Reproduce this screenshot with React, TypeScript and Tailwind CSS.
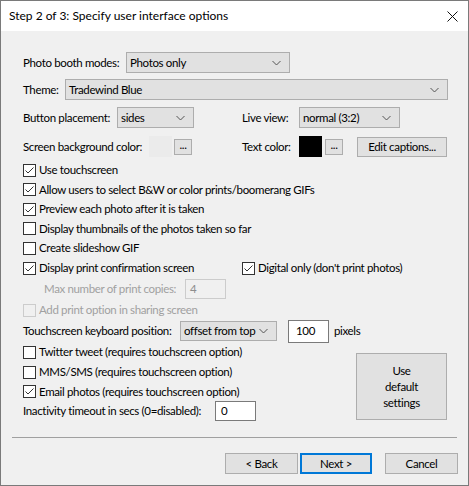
import React from 'react';

const font = { fontFamily: 'Lato, "Liberation Sans", Arial, sans-serif' };

function Check({ checked = false, disabled = false }: { checked?: boolean; disabled?: boolean }) {
  return (
    <span
      className={
        'flex h-[13px] w-[13px] shrink-0 items-center justify-center border ' +
        (disabled ? 'border-[#cccccc] bg-[#f0f0f0]' : 'border-[#333333] bg-white')
      }
    >
      {checked && (
        <svg width="11" height="11" viewBox="0 0 11 11">
          <path d="M1.5 5.5 L4 8 L9.5 2.5" fill="none" stroke="#333333" strokeWidth="1" />
        </svg>
      )}
    </span>
  );
}

function CheckRow({
  label,
  checked,
  disabled,
  h,
}: {
  label: string;
  checked?: boolean;
  disabled?: boolean;
  h: string;
}) {
  return (
    <div className={'flex items-center gap-[3px] ' + h}>
      <Check checked={checked} disabled={disabled} />
      <span className={disabled ? 'text-[#a0a0a0]' : 'text-black'}>{label}</span>
    </div>
  );
}

function Chevron() {
  return (
    <svg width="9" height="6" viewBox="0 0 9 6" className="shrink-0">
      <path d="M0.5 1 L4.5 5 L8.5 1" fill="none" stroke="#555555" strokeWidth="1" />
    </svg>
  );
}

function Combo({ value, w, h = 'h-[21px]' }: { value: string; w: string; h?: string }) {
  return (
    <div
      className={
        'flex shrink-0 items-center justify-between border border-[#adadad] bg-[#e1e1e1] pl-[3px] pr-[8px] ' + w + ' ' + h
      }
    >
      <span>{value}</span>
      <Chevron />
    </div>
  );
}

function Btn({ children, className = '' }: { children: React.ReactNode; className?: string }) {
  return (
    <div className={'flex shrink-0 items-center justify-center border border-[#adadad] bg-[#e1e1e1] ' + className}>
      {children}
    </div>
  );
}

export default function App() {
  return (
    <div
      className="flex h-[486px] w-[469px] flex-col whitespace-nowrap border border-[#7a7a7a] bg-[#f0f0f0] text-[11.5px] leading-none tracking-[-0.35px] text-black"
      style={font}
    >
      {/* title bar */}
      <div className="flex h-[30px] shrink-0 items-center justify-between bg-white pl-[8px] pr-[10px]">
        <span className="text-[12px] tracking-normal">Step 2 of 3: Specify user interface options</span>
        <svg width="11" height="11" viewBox="0 0 11 11">
          <path d="M0.5 0.5 L10.5 10.5 M10.5 0.5 L0.5 10.5" stroke="#111111" strokeWidth="1" />
        </svg>
      </div>

      <div className="flex flex-col pl-[22px] pt-[21px]">
        <div className="flex h-[21px] items-center">
          <span className="w-[103px] shrink-0">Photo booth modes:</span>
          <Combo value="Photos only" w="w-[164px]" />
        </div>
        <div className="mt-[6px] flex h-[21px] items-center">
          <span className="w-[42px] shrink-0">Theme:</span>
          <Combo value="Tradewind Blue" w="w-[383px]" />
        </div>
        <div className="mt-[7px] flex h-[21px] items-center">
          <span className="w-[94px] shrink-0">Button placement:</span>
          <Combo value="sides" w="w-[77px]" />
          <span className="ml-[48px] w-[57px] shrink-0">Live view:</span>
          <Combo value="normal (3:2)" w="w-[101px]" />
        </div>
        <div className="mt-[8px] flex h-[21px] items-center">
          <span className="w-[126px] shrink-0">Screen background color:</span>
          <span className="h-[21px] w-[23px] shrink-0 bg-[#ebebeb]" />
          <Btn className="ml-[2px] h-[16px] w-[18px] pb-[3px]">...</Btn>
          <span className="ml-[50px] w-[57px] shrink-0">Text color:</span>
          <span className="h-[21px] w-[23px] shrink-0 bg-black" />
          <Btn className="ml-[3px] h-[16px] w-[18px] pb-[3px]">...</Btn>
          <Btn className="ml-[14px] h-[20px] w-[90px]">Edit captions...</Btn>
        </div>

        <div className="mt-[3px] flex flex-col">
          <CheckRow h="h-[20px]" checked label="Use touchscreen" />
          <CheckRow h="h-[19px]" checked label="Allow users to select B&W or color prints/boomerang GIFs" />
          <CheckRow h="h-[20px]" checked label="Preview each photo after it is taken" />
          <CheckRow h="h-[19px]" label="Display thumbnails of the photos taken so far" />
          <CheckRow h="h-[20px]" label="Create slideshow GIF" />
          <div className="flex h-[20px] items-center">
            <div className="flex w-[219px] shrink-0 items-center gap-[3px]">
              <Check checked />
              <span>Display print confirmation screen</span>
            </div>
            <div className="flex items-center gap-[3px]">
              <Check checked />
              <span>Digital only (don't print photos)</span>
            </div>
          </div>
          <div className="flex h-[22px] items-center pl-[21px]">
            <span className="w-[141px] shrink-0 text-[#a0a0a0]">Max number of print copies:</span>
            <div className="flex h-[20px] w-[41px] shrink-0 items-center border border-[#cccccc] pl-[4px] text-[#8d8d8d]">4</div>
          </div>
          <CheckRow h="h-[20px]" disabled label="Add print option in sharing screen" />
          <div className="flex h-[22px] items-center">
            <span className="w-[157px] shrink-0">Touchscreen keyboard position:</span>
            <Combo value="offset from top" w="w-[97px]" h="h-[20px]" />
            <div className="ml-[11px] flex h-[23px] w-[41px] shrink-0 items-start border border-[#7a7a7a] bg-white pl-[7px] pt-[4px]">
              100
            </div>
            <span className="ml-[5px]">pixels</span>
          </div>
          <div className="flex">
            <div className="flex flex-col">
              <CheckRow h="h-[20px]" label="Twitter tweet (requires touchscreen option)" />
              <CheckRow h="h-[20px]" label="MMS/SMS (requires touchscreen option)" />
              <CheckRow h="h-[19px]" checked label="Email photos (requires touchscreen option)" />
              <div className="flex h-[20px] items-center">
                <span className="w-[192px] shrink-0">Inactivity timeout in secs (0=disabled):</span>
                <div className="flex h-[20px] w-[41px] shrink-0 items-center border border-[#7a7a7a] bg-white pl-[5px]">0</div>
              </div>
            </div>
            <Btn className="ml-auto mr-[21px] mt-[11px] h-[67px] w-[91px] text-center leading-[16px]">
              Use
              <br />
              default
              <br />
              settings
            </Btn>
          </div>
        </div>
      </div>

      <div className="mx-[11px] mt-[16px] h-[2px] border-t border-[#a0a0a0] border-b-white" />

      <div className="mt-[14px] flex justify-end pr-[10px]">
        <Btn className="h-[21px] w-[73px]">&lt; Back</Btn>
        <div className="ml-[2px] flex h-[21px] w-[72px] items-center justify-center border-2 border-[#0078d7] bg-[#e1e1e1]">
          Next &gt;
        </div>
        <Btn className="ml-[13px] h-[21px] w-[73px]">Cancel</Btn>
      </div>
    </div>
  );
}
